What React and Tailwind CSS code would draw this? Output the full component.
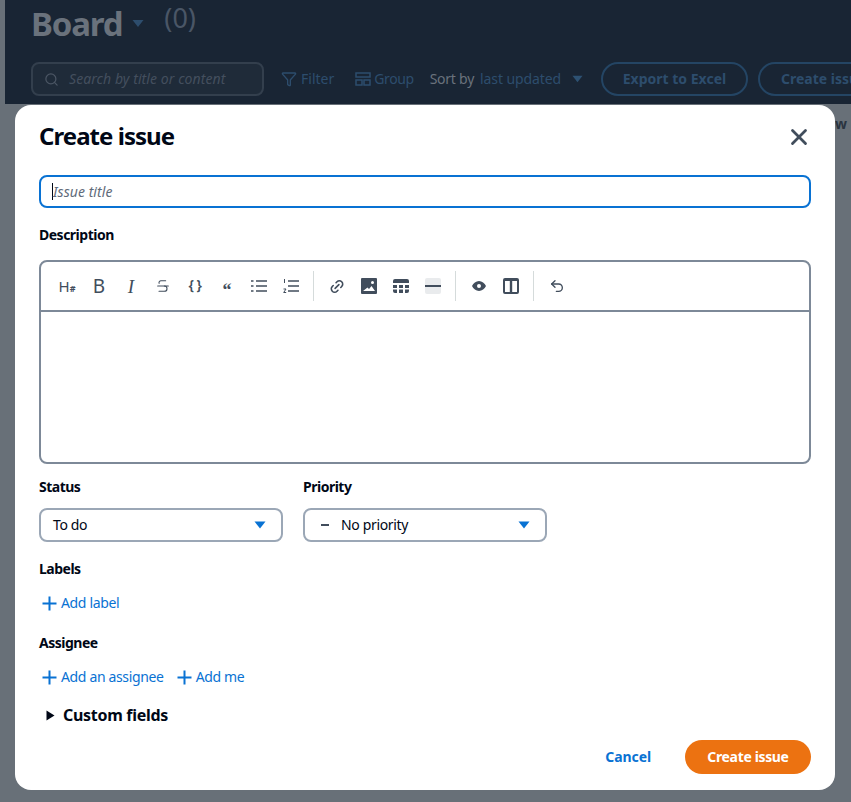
import React from "react";
import { X, Search, Filter, Link2, Undo2, Strikethrough } from "lucide-react";

const Caret = ({ className = "", w = 12, h = 8 }) => (
  <svg width={w} height={h} viewBox="0 0 12 8" className={`shrink-0 ${className}`}><path d="M0.5 0.5H11.5L6 7.5Z" fill="currentColor" /></svg>
);
const Sep = () => <div className="w-px h-[30px] bg-[#d5dbdb] ml-[6px] mr-[7px]" />;
const Tool = ({ children, active }) => (
  <div className="w-[30px] h-[30px] mx-px flex items-center justify-center text-[#414d5c] rounded-[3px]">
    <div className={`w-4 h-4 flex items-center justify-center rounded-[2px] ${active ? "bg-[#e9ebed]" : ""}`}>{children}</div>
  </div>
);
const ListIcon = ({ numbered }) => (
  <svg width="16" height="16" viewBox="0 0 16 16" fill="none" stroke="currentColor" strokeWidth="1.4">
    <path d="M5 3H16M5 8H16M5 13H16" />
    {numbered ? (
      <path d="M1.500 1V5M0.500 11H3L0.700 14.500H3.200" strokeWidth="1" />
    ) : (
      <path d="M0 3H2.500M0 8H2.500M0 13H2.500" />
    )}
  </svg>
);
const Add = ({ children }) => (
  <span className="flex items-center gap-1 text-[#0972d3] text-[14px] leading-5">
    <svg width="15" height="15" viewBox="0 0 15 15"><path d="M7.5 0.5V14.5M0.5 7.5H14.5" stroke="currentColor" strokeWidth="2" /></svg>
    <span className="tracking-[-0.35px]">{children}</span>
  </span>
);
const Label = ({ children, className = "" }) => <div className={`text-[14px] leading-[18px] font-bold text-[#000716] tracking-[-0.5px] ${className}`}>{children}</div>;
const Select = ({ children }) => (
  <div className="w-[244px] h-[34px] border-2 border-[#9ba7b6] rounded-lg flex items-center justify-between pl-3 pr-[15px] text-[14px] text-[#000716] tracking-[-0.35px]">
    <div className="flex items-center pb-0.5">{children}</div>
    <Caret className="text-[#0972d3]" />
  </div>
);

export default function App() {
  return (
    <div className="relative w-[851px] h-[802px] overflow-hidden bg-[#687078] pl-[5px] font-['Noto_Sans','Open_Sans',sans-serif]">
      <div className="h-[104px] bg-[#192534] pl-[26px] flex flex-col overflow-hidden">
        <div className="flex items-start h-[62px] pt-[3px]">
          <span className="text-[33px] leading-[42px] font-bold text-[#6a727c] tracking-[-1.2px]">Board</span>
          <Caret className="text-[#2d4d6d] mt-[16px] ml-[10px]" w={12} h={9} />
          <span className="text-[27px] leading-[36px] text-[#4a5666] ml-[20px] -mt-[3px]">(0)</span>
        </div>
        <div className="flex items-center h-[34px] whitespace-nowrap text-[14px]">
          <div className="w-[233px] h-[34px] rounded-lg border-2 border-[#333f4d] bg-[#1f2b39] flex items-center pl-[11px] text-[#444f5e] shrink-0">
            <Search size={15} strokeWidth={2} className="text-[#4b5664]" />
            <span className="italic ml-[10px] tracking-[0.08px] pb-0.5">Search by title or content</span>
          </div>
          <div className="flex items-center ml-[17px] text-[#2d4d6d] shrink-0">
            <Filter size={16} strokeWidth={2} className="mr-[3px]" /><span className="pb-0.5 ml-px">Filter</span>
          </div>
          <div className="flex items-center ml-[21px] text-[#2d4d6d] shrink-0">
            <svg width="16" height="14" viewBox="0 0 16 14" fill="none" stroke="currentColor" strokeWidth="1.5" className="mr-[3px]"><rect x="1" y="1" width="14" height="4" /><rect x="1" y="8" width="6" height="5" /><rect x="9" y="8" width="6" height="5" /></svg><span className="pb-0.5 tracking-[-0.4px]">Group</span>
          </div>
          <span className="ml-[16px] text-[#6a727c] tracking-[-0.25px] pb-0.5 shrink-0">Sort by</span>
          <span className="ml-[6px] text-[#2d4d6d] tracking-[-0.1px] pb-0.5 shrink-0">last updated</span>
          <Caret className="text-[#2d5172] ml-[11px]" w={11} h={8} />
          <div className="ml-[18px] w-[147px] h-[34px] shrink-0 rounded-full border-2 border-[#244564] flex items-center justify-center text-[#2d4d6d] font-bold pb-0.5">Export to Excel</div>
          <div className="ml-[10px] w-[147px] h-[34px] shrink-0 rounded-full border-2 border-[#244564] flex items-center pl-[21px] text-[#2d4d6d] font-bold pb-0.5">Create issue</div>
        </div>
      </div>

      <div className="absolute left-[835px] top-[113px] text-[14px] font-bold text-[#2a3440]">w</div>

      <div className="absolute left-[15px] top-[105px] w-[820px] h-[685px] bg-white rounded-2xl px-6 pt-5">
        <div className="flex items-center justify-between h-6">
          <div className="text-[24px] leading-6 font-bold text-[#000716] tracking-[-0.95px] -mt-0.5">Create issue</div>
          <X size={26} strokeWidth={2.6} className="text-[#414d5c] -mr-px" />
        </div>
        <div className="mt-[26px] h-[33px] border-2 border-[#0972d3] rounded-lg flex items-center pl-3 text-[14px] italic text-[#5f6b7a] tracking-[0.05px]">
          <span className="w-px h-[17px] bg-[#000716] -ml-px" /><span>Issue title</span>
        </div>
        <Label className="mt-[18px]">Description</Label>
        <div className="mt-4 h-[204px] border-2 border-[#7d8998] rounded-lg">
          <div className="h-[50px] border-b-2 border-[#7d8998] flex items-center pl-[10px]">
            <Tool><span className="flex items-baseline text-[15px] leading-none"><span>H</span><span className="text-[9px] font-bold">#</span></span></Tool>
            <Tool><span className="text-[19px] leading-none font-normal">B</span></Tool>
            <Tool><span className="text-[19px] leading-none italic font-['Liberation_Serif',serif]">I</span></Tool>
            <Tool><Strikethrough size={16} strokeWidth={1.6} /></Tool>
            <Tool><span className="text-[14px] font-semibold leading-none tracking-[-0.5px] whitespace-nowrap pb-0.5">{"{ }"}</span></Tool>
            <Tool><span className="text-[18px] font-bold leading-none mt-[7px] font-['Liberation_Serif',serif]">“</span></Tool>
            <Tool><ListIcon /></Tool>
            <Tool><ListIcon numbered /></Tool>
            <Sep />
            <Tool><Link2 size={17} strokeWidth={2.4} className="-rotate-45" /></Tool>
            <Tool>
              <svg width="16" height="16" viewBox="0 0 16 16"><path fillRule="evenodd" fill="currentColor" d="M1 0h14a1 1 0 0 1 1 1v14a1 1 0 0 1-1 1H1a1 1 0 0 1-1-1V1a1 1 0 0 1 1-1zM2 13h12l-3.5-5-2.5 3-1.5-1.500zM11.500 3a1.500 1.500 0 1 0 0 3 1.500 1.500 0 0 0 0-3z" /></svg>
            </Tool>
            <Tool>
              <svg width="16" height="14" viewBox="0 0 16 14"><path fill="currentColor" d="M2 0h12a2 2 0 0 1 2 2v2H0V2a2 2 0 0 1 2-2zM0 6h4v3H0zM6 6h4v3H6zM12 6h4v3h-4zM0 10.500h4V14H2a2 2 0 0 1-2-2zM6 10.500h4V14H6zM12 10.500h4V12a2 2 0 0 1-2 2h-2z" /></svg>
            </Tool>
            <Tool active><div className="w-4 h-[2px] bg-[#414d5c]" /></Tool>
            <Sep />
            <Tool>
              <svg width="14" height="10" viewBox="0 0 14 10"><path fillRule="evenodd" fill="currentColor" d="M7 0c3 0 5.600 2.200 7 5-1.400 2.800-4 5-7 5S1.400 7.800 0 5c1.400-2.800 4-5 7-5zm0 3a2 2 0 1 0 0 4 2 2 0 0 0 0-4z" /></svg>
            </Tool>
            <Tool>
              <svg width="16" height="16" viewBox="0 0 16 16" fill="none" stroke="currentColor" strokeWidth="2"><rect x="1" y="1" width="14" height="14" rx="1" /><path d="M8 1V15" strokeWidth="2.4" /><path d="M1 2h14" strokeWidth="2" /></svg>
            </Tool>
            <Sep />
            <Tool><Undo2 size={16} strokeWidth={2} /></Tool>
          </div>
        </div>
        <div className="mt-[14px] flex gap-5">
          <div>
            <Label>Status</Label>
            <div className="mt-3"><Select>To do</Select></div>
          </div>
          <div>
            <Label>Priority</Label>
            <div className="mt-3"><Select><span className="w-2 h-[2px] bg-[#414d5c] ml-1 mr-[12px] mt-0.5" />No priority</Select></div>
          </div>
        </div>
        <Label className="mt-[18px]">Labels</Label>
        <div className="mt-[15px] ml-[3px]"><Add>Add label</Add></div>
        <Label className="mt-[21px]">Assignee</Label>
        <div className="mt-[15px] ml-[3px] flex gap-[13px]"><Add>Add an assignee</Add><Add>Add me</Add></div>
        <div className="mt-[18px] ml-[7px] flex items-center">
          <svg width="9" height="11" viewBox="0 0 9 11"><path d="M0.500 0.500L8.500 5.500L0.500 10.500Z" fill="#000716" /></svg>
          <span className="ml-2 text-[16px] leading-5 font-bold text-[#000716] tracking-[-0.3px]">Custom fields</span>
        </div>
        <div className="absolute right-[24px] bottom-[16px] flex items-center">
          <span className="text-[14px] font-bold text-[#0972d3] tracking-[-0.1px] pb-0.5">Cancel</span>
          <div className="ml-[34px] w-[126px] h-[34px] rounded-full bg-[#ec7211] flex items-center justify-center text-[14px] font-bold text-white tracking-[-0.35px] pb-0.5">Create issue</div>
        </div>
      </div>
    </div>
  );
}
